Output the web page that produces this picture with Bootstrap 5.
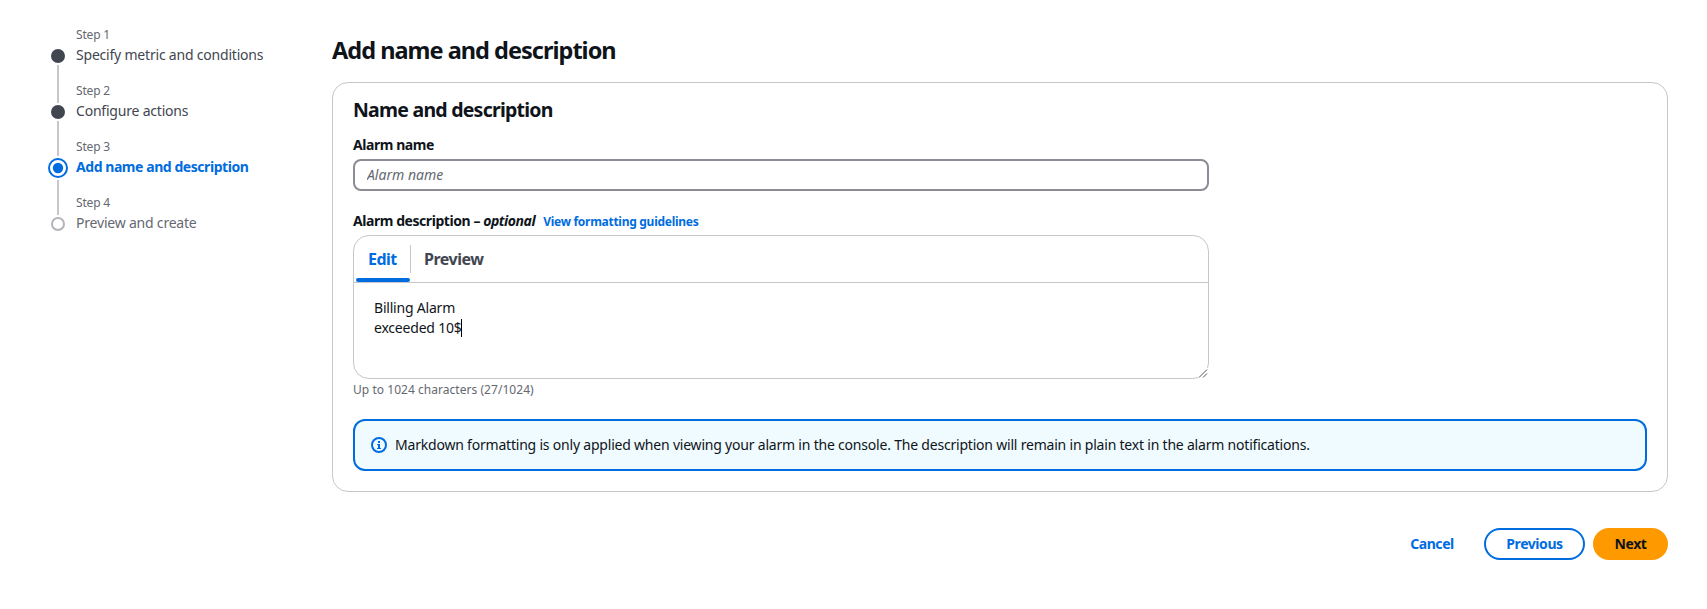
<!DOCTYPE html>
<html lang="en">
<head>
<meta charset="utf-8">
<meta name="viewport" content="width=device-width, initial-scale=1">
<title>Add name and description</title>
<link href="https://cdn.jsdelivr.net/npm/bootstrap@5.3.0/dist/css/bootstrap.min.css" rel="stylesheet">
<style>
  :root { --ink: #0f141a; --blue: #006ce0; --line: #c6c6cd; --muted: #656871; --slate: #424650; }
  body { font-family: "Noto Sans", "Open Sans", sans-serif; font-size: 14px; line-height: 20px; letter-spacing: -.205px; color: var(--ink); background: #fff; }
  .heavy { font-weight: 700; letter-spacing: -.44px; }
  .wizard { padding: 27px 39px 0 48px; }
  .steps { width: 284px; }
  .step { height: 56px; }
  .step-rail { width: 20px; margin-right: 8px; }
  .step-mark { height: 20px; margin-top: 19px; }
  .step-mark.current { height: 23px; }
  .dot { width: 14px; height: 14px; border-radius: 50%; border: 2px solid #b4b4bb; }
  .dot.done { background: var(--slate); border-color: var(--slate); }
  .stem { width: 2px; background: var(--line); margin: -1px 0 -20px; }
  .stem.to-current { margin-bottom: -17px; }
  .step-label { font-size: 12px; line-height: 16px; color: var(--muted); letter-spacing: -.17px; margin-bottom: 2px; }
  .step-title { color: var(--slate); }
  .step-title.active { color: var(--blue); }
  .step-title.upcoming { color: var(--muted); }
  h1 { font-size: 23.5px; line-height: 30px; font-weight: 700; letter-spacing: -.98px; margin: 8px 0 17px; }
  h2 { font-size: 19.5px; line-height: 24px; font-weight: 700; letter-spacing: -.76px; margin: 0 0 13px; }
  .panel { border: 1px solid var(--line); border-radius: 16px; padding: 15px 20px 19px; height: 410px; }
  .field { width: 856px; }
  .field + .field { margin-top: 20px; }
  .field .form-control.name-input { height: 32px; border: 2px solid #8c8c94; border-radius: 8px; padding: 0 12px 1px; font-size: 14px; letter-spacing: 0; margin-top: 4px; }
  .name-input::placeholder { color: var(--muted); font-style: italic; opacity: 1; }
  .desc-label { height: 20px; }
  .guide { font-size: 12px; color: var(--blue); letter-spacing: -.28px; margin-left: 8px; }
  .editor { border: 1px solid var(--line); border-radius: 16px; height: 144px; margin-top: 4px; }
  .editor-tabs { height: 47px; border-bottom: 1px solid var(--line); padding-left: 2px; }
  .tab { font-size: 16px; line-height: 20px; color: var(--slate); padding: 13px 12px 0 13px; letter-spacing: -.5px; }
  .tab.selected { color: var(--blue); width: 54px; padding: 13px 0 0 12px; }
  .tab-underline { height: 4px; border-radius: 4px; background: var(--blue); }
  .tab-gap { width: 1px; height: 28px; background: var(--line); margin-top: 9px; }
  .editor-text { padding: 15px 20px; }
  .caret { width: 1px; height: 18px; background: #000; margin-left: -1px; }
  .grip { right: -1px; bottom: -1px; background: #fff; }
  .hint { font-size: 12px; line-height: 16px; color: var(--muted); letter-spacing: .04px; margin-top: 3px; }
  .notice { height: 52px; border: 2px solid var(--blue); border-radius: 12px; background: #f0fbff; padding: 0 16px; margin-top: 21px; }
  .actions { margin-top: 36px; height: 32px; }
  .actions .btn { height: 32px; padding: 0; font-size: 14px; line-height: 28px; border: 2px solid transparent; border-radius: 16px; }
  .actions .btn-cancel { width: 84px; color: var(--blue); margin-right: 10px; }
  .actions .btn-prev { width: 101px; color: var(--blue); border-color: var(--blue); margin-right: 8px; }
  .actions .btn-next { width: 75px; color: var(--ink); background: #f90; border-color: #f90; }
</style>
</head>
<body>
<div class="wizard d-flex">
  <nav class="steps flex-shrink-0">
    <div class="step d-flex">
      <div class="step-rail d-flex flex-column align-items-center">
        <div class="step-mark d-flex align-items-center"><div class="dot done"></div></div>
        <div class="stem flex-grow-1"></div>
      </div>
      <div><div class="step-label">Step 1</div><div class="step-title">Specify metric and conditions</div></div>
    </div>
    <div class="step d-flex">
      <div class="step-rail d-flex flex-column align-items-center">
        <div class="step-mark d-flex align-items-center"><div class="dot done"></div></div>
        <div class="stem to-current flex-grow-1"></div>
      </div>
      <div><div class="step-label">Step 2</div><div class="step-title">Configure actions</div></div>
    </div>
    <div class="step d-flex">
      <div class="step-rail d-flex flex-column align-items-center">
        <div class="step-mark current d-flex">
          <svg width="20" height="20" viewBox="0 0 20 20"><circle cx="10" cy="10" r="9" fill="none" stroke="#006ce0" stroke-width="2"/><circle cx="10" cy="10" r="5.2" fill="#006ce0"/></svg>
        </div>
        <div class="stem flex-grow-1"></div>
      </div>
      <div><div class="step-label">Step 3</div><div class="step-title active heavy">Add name and description</div></div>
    </div>
    <div class="step d-flex">
      <div class="step-rail d-flex flex-column align-items-center">
        <div class="step-mark d-flex align-items-center"><div class="dot"></div></div>
      </div>
      <div><div class="step-label">Step 4</div><div class="step-title upcoming">Preview and create</div></div>
    </div>
  </nav>

  <main class="flex-grow-1">
    <h1>Add name and description</h1>
    <section class="panel">
      <h2>Name and description</h2>
      <div class="field">
        <label class="d-block heavy" for="alarmName">Alarm name</label>
        <input id="alarmName" class="form-control name-input" type="text" placeholder="Alarm name">
      </div>
      <div class="field">
        <div class="desc-label d-flex align-items-baseline heavy">
          <span>Alarm description –&nbsp;<i>optional</i></span>
          <a class="guide text-decoration-none" href="#">View formatting guidelines</a>
        </div>
        <div class="editor position-relative">
          <div class="editor-tabs d-flex">
            <div class="d-flex flex-column justify-content-between">
              <div class="tab selected heavy">Edit</div>
              <div class="tab-underline"></div>
            </div>
            <div class="tab-gap"></div>
            <div class="tab heavy">Preview</div>
          </div>
          <div class="editor-text">
            <div>Billing Alarm</div>
            <div class="d-flex align-items-center">exceeded 10$<span class="caret"></span></div>
          </div>
          <svg class="grip position-absolute" width="11" height="11" viewBox="0 0 11 11"><path d="M1 9.5 9 1.5M5 9.5 9 5.5" stroke="#555" fill="none"/></svg>
        </div>
        <div class="hint">Up to 1024 characters (27/1024)</div>
      </div>
      <div class="notice d-flex align-items-center">
        <svg class="me-2 flex-shrink-0" width="16" height="16" viewBox="0 0 16 16" fill="none" stroke="#006ce0" stroke-width="2"><circle cx="8" cy="8" r="7"/><path d="M8 4v2M8 7v5"/><path d="M6 7.5h2M6 11.5h4" stroke-width="1"/></svg>
        <span>Markdown formatting is only applied when viewing your alarm in the console. The description will remain in plain text in the alarm notifications.</span>
      </div>
    </section>
    <div class="actions d-flex justify-content-end">
      <button class="btn btn-cancel heavy">Cancel</button>
      <button class="btn btn-prev heavy">Previous</button>
      <button class="btn btn-next heavy">Next</button>
    </div>
  </main>
</div>
<script src="https://cdn.jsdelivr.net/npm/bootstrap@5.3.0/dist/js/bootstrap.bundle.min.js"></script>
</body>
</html>
